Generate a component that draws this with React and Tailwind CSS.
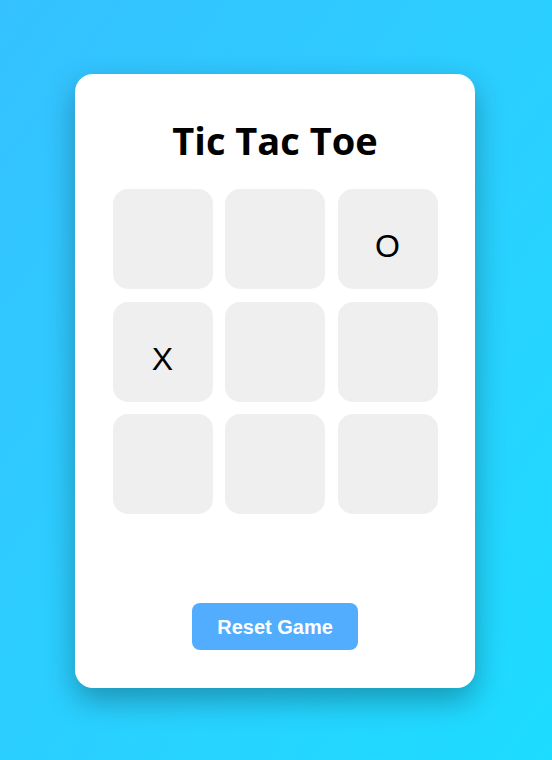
export default function App() {
  const board = ['', '', 'O', 'X', '', '', '', '', ''];

  return (
    <div className="min-h-screen flex items-center justify-center bg-gradient-to-br from-[#35c1ff] to-[#1cdcff]">
      <div className="w-[400px] h-[614px] mr-[2px] mt-[2px] bg-white rounded-[18px] shadow-[0_12px_30px_rgba(0,0,0,0.3)] flex flex-col items-center pt-[43px]">
        <h1 className="text-[38px] leading-[46px] font-bold text-black font-['Open_Sans',sans-serif]">
          Tic Tac Toe
        </h1>

        <div className="grid grid-cols-[repeat(3,100px)] gap-[12.5px] mt-[26px]">
          {board.map((cell, i) => (
            <button
              key={i}
              className="w-[100px] h-[100px] bg-[#efefef] rounded-[15px] flex items-center justify-center pt-[14px] text-[32px] text-black font-['Liberation_Sans',Arial,sans-serif]"
            >
              {cell}
            </button>
          ))}
        </div>

        <button className="mt-[89px] w-[166px] h-[47px] rounded-[8px] bg-[#52adff] text-white text-[20px] font-bold font-['Liberation_Sans',Arial,sans-serif]">
          Reset Game
        </button>
      </div>
    </div>
  );
}
